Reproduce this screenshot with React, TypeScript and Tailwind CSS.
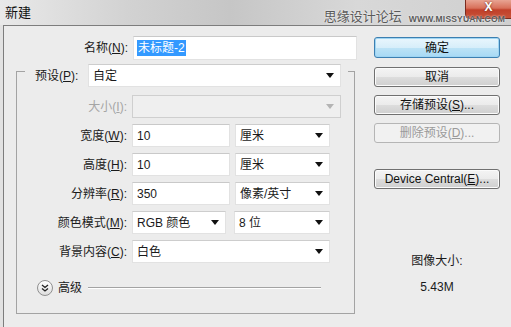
import type { ReactNode } from 'react';

function Arrow({ disabled }: { disabled?: boolean }) {
  return (
    <svg width="8" height="5" viewBox="0 0 8 5" className="shrink-0">
      <path d="M0 0 H8 L4 5 Z" fill={disabled ? '#b4b4b4' : '#111'} />
    </svg>
  );
}

function Select({ w, text, disabled }: { w: string; text?: string; disabled?: boolean }) {
  return (
    <div
      className={`${w} flex h-[23px] items-center justify-between border pl-[4px] pr-[6px] ${
        disabled ? 'border-[#cfcfcf] bg-[#efefef]' : 'border-[#e2e2e2] border-t-[#cdcdcd] bg-white'
      }`}
    >
      <span>{text}</span>
      <Arrow disabled={disabled} />
    </div>
  );
}

function Input({ w, children }: { w: string; children: ReactNode }) {
  return (
    <div className={`${w} flex h-[23px] items-center border border-[#e2e2e2] border-t-[#c9c9c9] bg-white pl-[4px]`}>
      {children}
    </div>
  );
}

function Label({ text, k, tail = '):', muted }: { text: string; k: string; tail?: string; muted?: boolean }) {
  return (
    <span className={muted ? 'text-[#a5a5a5]' : 'text-[#1a1a1a]'}>
      {text}(<span className="underline">{k}</span>
      {tail}
    </span>
  );
}

function Row({ label, children }: { label: ReactNode; children: ReactNode }) {
  return (
    <div className="flex h-[23px] items-center gap-[5px]">
      <div className="w-[110px] text-right">{label}</div>
      {children}
    </div>
  );
}

function Button({ children, tone = 'normal', className = '' }: { children: ReactNode; tone?: 'normal' | 'default' | 'disabled'; className?: string }) {
  const look =
    tone === 'default'
      ? 'border-[#3c7fb1] bg-[linear-gradient(#e9f6fd_0%,#d7eefa_50%,#bde3f6_51%,#a7d9f5_100%)] shadow-[inset_0_0_0_1px_#9fd5f3] text-[#111]'
      : tone === 'disabled'
        ? 'border-[#b5b5b5] bg-[#f1f1f1] text-[#9a9a9a]'
        : 'border-[#707070] bg-[linear-gradient(#f4f4f4_0%,#ebebeb_50%,#dddddd_51%,#cfcfcf_100%)] shadow-[inset_0_0_0_1px_#fbfbfb] text-[#111]';
  return (
    <div className={`flex h-[20px] w-[126px] items-center justify-center rounded-[3px] border ${look} ${className}`}>
      {children}
    </div>
  );
}

export default function App() {
  return (
    <div className="flex h-[327px] w-[511px] flex-col overflow-hidden bg-[#e2e2e2] font-['Liberation_Sans','Noto_Sans_CJK_SC',sans-serif] text-[12px] leading-none text-[#1a1a1a]">
      {/* title bar */}
      <div className="relative flex h-[25px] shrink-0 bg-[linear-gradient(90deg,#e9e9e9_0%,#d2d2d2_25%,#c6c6c6_45%,#d8d8d8_70%,#cfcfcf_100%)]">
        <div className="pl-[5px] pt-[6px] text-[13px] text-[#111]">新建</div>
        {/* close button sits over the watermark */}
        <div className="absolute right-0 top-0 flex h-[19px] w-[46px] justify-center rounded-bl-[5px] border border-t-0 border-r-0 border-[#7a2b1f] bg-[linear-gradient(#e8a493_0%,#d8705a_45%,#c1402a_55%,#c75238_100%)] pt-[1px]">
          <span className="text-[12px] font-bold leading-none text-white [text-shadow:0_0_2px_#5a1a10]">X</span>
        </div>
        <div className="relative ml-auto flex items-end gap-[7px] pb-[2px] pr-[6px]">
          <span className="text-[13px] text-[#5a5a5a] [text-shadow:0_0_2px_#fff]">思缘设计论坛</span>
          <span className="text-[8.5px] font-bold tracking-[0.2px] text-[#5a5a5a] [text-shadow:0_0_2px_#fff]">WWW.MISSYUAN.COM</span>
        </div>
      </div>

      {/* dialog body */}
      <div className="ml-[3px] flex flex-1 border-l border-t border-[#7d7d7d] bg-[#ececec]">
        {/* left column */}
        <div className="w-[370px] shrink-0">
          <div className="flex items-center pt-[10px]">
            <div className="w-[124px] text-right">
              <Label text="名称" k="N" />
            </div>
            <div className="ml-[5px] flex h-[24px] w-[224px] items-center border border-[#e2e2e2] border-t-[#c9c9c9] bg-white pl-[3px]">
              <span className="bg-[#3399ff] px-[1px] py-[2px] text-white">未标题-2</span>
            </div>
          </div>

          {/* group box */}
          <div className="ml-[12px] mt-[11px] flex h-[243px] w-[339px] flex-col border border-[#a3a3a3]">
            <div className="-mt-[8px] ml-[8px] flex w-[323px] items-center bg-[#ececec] pr-[7px]">
              <div className="w-[63px] pl-[10px]">
                <Label text="预设" k="P" />
              </div>
              <Select w="w-[253px]" text="自定" />
            </div>

            <div className="mt-[8px] flex flex-col gap-[6px]">
              <Row label={<Label text="大小" k="I" muted />}>
                <Select w="w-[209px]" disabled />
              </Row>
              <Row label={<Label text="宽度" k="W" />}>
                <Input w="w-[98px]">10</Input>
                <Select w="w-[95px]" text="厘米" />
              </Row>
              <Row label={<Label text="高度" k="H" />}>
                <Input w="w-[98px]">10</Input>
                <Select w="w-[95px]" text="厘米" />
              </Row>
              <Row label={<Label text="分辨率" k="R" />}>
                <Input w="w-[98px]">350</Input>
                <Select w="w-[95px]" text="像素/英寸" />
              </Row>
              <Row label={<Label text="颜色模式" k="M" />}>
                <Select w="w-[94px]" text="RGB 颜色" />
                <div className="ml-[3px]">
                  <Select w="w-[96px]" text="8 位" />
                </div>
              </Row>
              <Row label={<Label text="背景内容" k="C" />}>
                <Select w="w-[198px]" text="白色" />
              </Row>
            </div>

            <div className="ml-[20px] mt-[17px] flex items-center">
              <div className="flex h-[16px] w-[16px] items-center justify-center rounded-full border border-[#8f8f8f] bg-[linear-gradient(#ffffff,#dedede)]">
                <svg width="8" height="8" viewBox="0 0 8 8">
                  <path d="M1 1 L4 3.5 L7 1 M1 4.5 L4 7 L7 4.5" fill="none" stroke="#222" strokeWidth="1.3" />
                </svg>
              </div>
              <span className="ml-[5px]">高级</span>
              <div className="ml-[6px] h-[2px] w-[233px] border-t border-b border-t-[#a3a3a3] border-b-white" />
            </div>
          </div>
        </div>

        {/* right column */}
        <div className="flex w-[126px] flex-col pt-[11px]">
          <Button tone="default" className="h-[21px]">确定</Button>
          <Button className="mt-[9px]">取消</Button>
          <Button className="mt-[8px]">
            存储预设(<span className="underline">S</span>)...
          </Button>
          <Button tone="disabled" className="mt-[8px]">
            删除预设(<span className="underline">D</span>)...
          </Button>
          <Button className="mt-[26px]">
            Device Central(<span className="underline">E</span>)...
          </Button>
          <div className="mt-[66px] text-center">图像大小:</div>
          <div className="mt-[14px] text-center">5.43M</div>
        </div>
      </div>
    </div>
  );
}
